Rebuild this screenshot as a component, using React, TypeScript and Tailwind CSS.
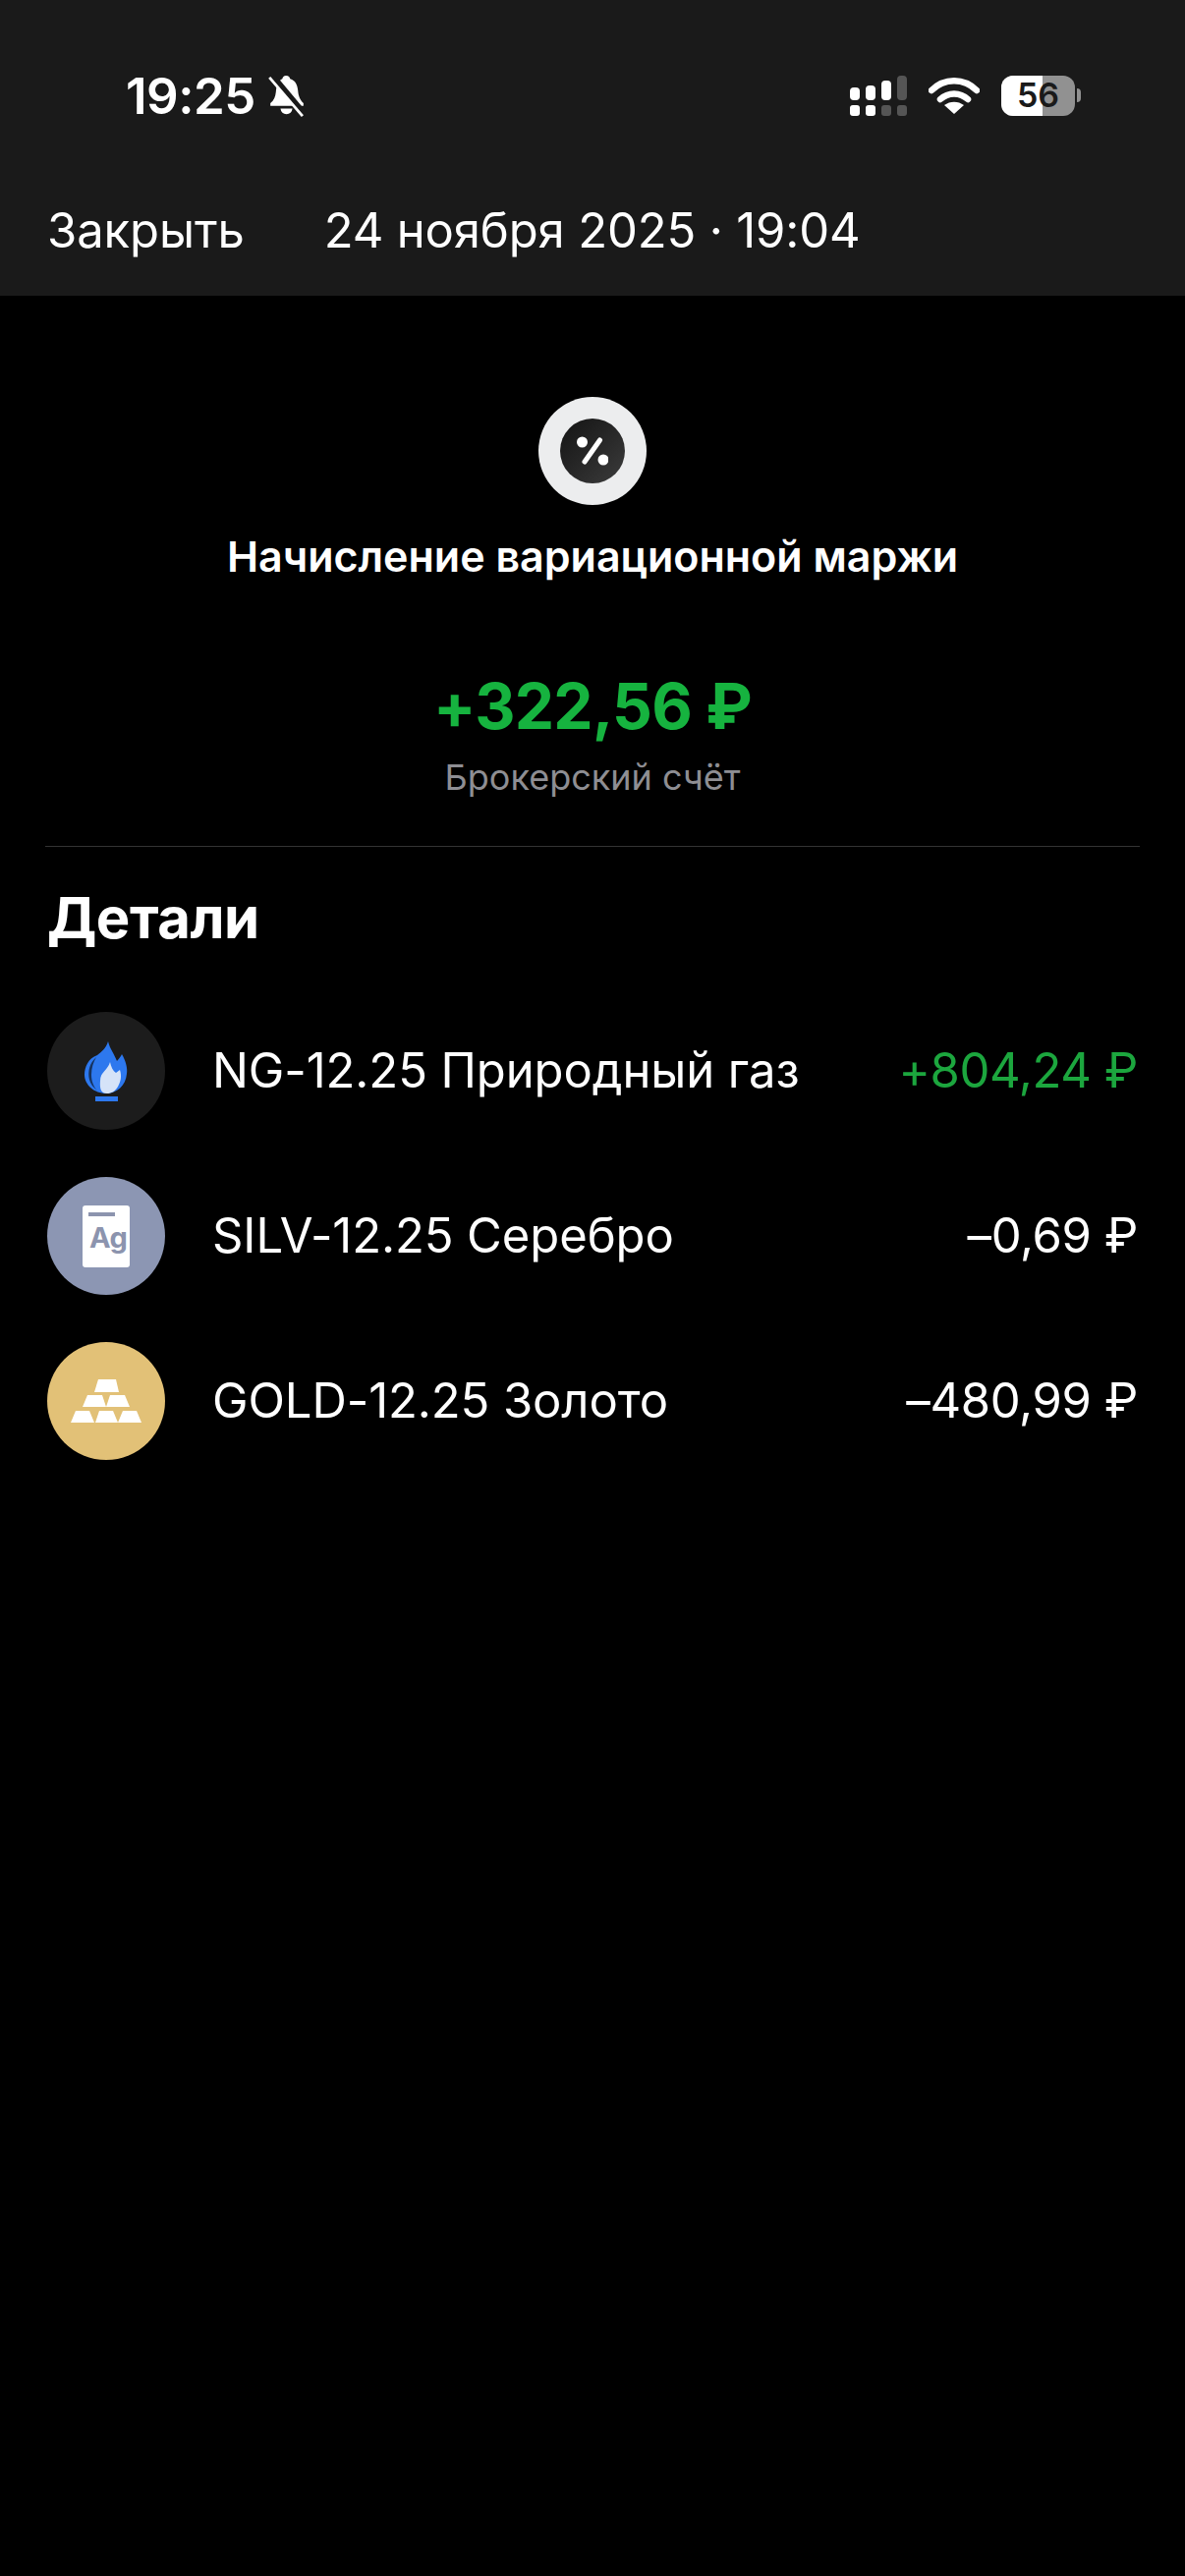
const font = "font-['Inter','Noto_Sans',sans-serif]";

function BellOff() {
  return (
    <svg width="40" height="43" viewBox="0 0 40 46">
      <path d="M19 1c3 0 4 1.500 4.500 3.500C29 6 31.500 11 32 17c.5 6 2 10 6 14v3H2v-3c4-3 5.500-7 6-12 .5-7 3-13 7-14.500C15.500 2.500 16.500 1 19 1z" fill="#fff" />
      <path d="M13 37h13c-.5 4-3 6-6.500 6S13.500 41 13 37z" fill="#fff" />
      <path d="M4 1l36 43" stroke="#1a1a1a" strokeWidth="6.500" />
      <path d="M1 3l36 42" stroke="#fff" strokeWidth="3" />
    </svg>
  );
}

function Cellular() {
  const top = [
    { h: 13, c: "#fff" },
    { h: 15, c: "#fff" },
    { h: 20, c: "#fff" },
    { h: 25, c: "#555" },
  ];
  const bottom = ["#fff", "#fff", "#555", "#555"];
  return (
    <div className="flex w-[58px] flex-col gap-[5px]">
      <div className="flex h-[25px] items-end justify-between">
        {top.map((b, i) => (
          <div key={i} className="w-[10px] rounded-[4px]" style={{ height: b.h, background: b.c }} />
        ))}
      </div>
      <div className="flex justify-between">
        {bottom.map((c, i) => (
          <div key={i} className="h-[11px] w-[10px] rounded-[3px]" style={{ background: c }} />
        ))}
      </div>
    </div>
  );
}

function Wifi() {
  return (
    <svg width="52" height="38" viewBox="0 0 52 38" fill="none">
      <path d="M3 14C16 1 36 1 49 14" stroke="#fff" strokeWidth="6.500" strokeLinecap="round" />
      <path d="M12 23c8-7.500 20-7.500 28 0" stroke="#fff" strokeWidth="6.500" strokeLinecap="round" />
      <path d="M16 29c6-4.500 14-4.500 20 0L26 38z" fill="#fff" />
    </svg>
  );
}

function Battery() {
  return (
    <div className="flex items-center gap-[2px]">
      <div className="relative h-[41px] w-[75px] overflow-hidden rounded-[12px] bg-[#919191]">
        <div className="h-full w-[42px] bg-white" />
        <span className="absolute inset-0 flex items-center justify-center text-[34px] leading-none font-semibold text-[#1a1a1a]">56</span>
      </div>
      <div className="h-[14px] w-[4px] rounded-r-full bg-[#919191]" />
    </div>
  );
}

function GasIcon() {
  return (
    <svg width="44" height="61" viewBox="0 0 44 61">
      <path d="M24 0c2 8 6 12 9 20 2-2 4-5 5-7 4 7 6 14 5 20-1 12-10 20-21 20C10 53 0 44 0 34 0 26 4 17 13 14c4-3 9-7 11-14z" fill="#2d78ee" />
      <path d="M12 16C5 22 3 31 5 39c1 4 4 8 8 11-4-4-6-10-6-16 0-7 2-13 5-18z" fill="#16335f" />
      <path d="M26 21c1 5 3 9 6 11l4-3c2 6 1 12-2 17-3 5-7 7-11 7-7 0-7.500-6-7-13 0-9 8-11 10-19z" fill="#d5e3f8" />
      <rect x="11" y="56" width="23" height="5" fill="#2d78ee" />
    </svg>
  );
}

function SilverIcon() {
  return (
    <div className="flex h-[63px] w-[48px] flex-col rounded-[3px] bg-white px-[6px] pt-[7px]">
      <div className="h-[4px] w-[27px] bg-[#8c94ae]" />
      <span className="mt-[7px] ml-[1px] text-[29px] leading-[30px] font-bold tracking-[-0.5px] text-[#8c94ae]">Ag</span>
    </div>
  );
}

function GoldIcon() {
  return (
    <svg width="72" height="44" viewBox="0 0 72 44" fill="#fff">
      <path d="M28 0h18l3 13H24z" />
      <path d="M17 16h15l4 12H12z" />
      <path d="M40 16h15l5 12H36z" />
      <path d="M5 32h14l5 12H0z" />
      <path d="M29 32h14l5 12H25z" />
      <path d="M53 32h14l5 12H48z" />
    </svg>
  );
}

const rows = [
  { name: "NG-12.25 Природный газ", value: "+804,24 ₽", green: true, bg: "bg-[#1c1c1c]", icon: <GasIcon /> },
  { name: "SILV-12.25 Серебро", value: "–0,69 ₽", green: false, bg: "bg-[#8c96b3]", icon: <SilverIcon /> },
  { name: "GOLD-12.25 Золото", value: "–480,99 ₽", green: false, bg: "bg-[#e2c177]", icon: <GoldIcon /> },
];

export default function App() {
  return (
    <div className={`${font} flex h-[2622px] w-[1206px] flex-col overflow-hidden bg-black text-white`}>
      {/* Header */}
      <header className="h-[301px] shrink-0 bg-[#1a1a1a]">
        <div className="flex items-center justify-between pt-[66px] pr-[106px] pl-[128px]">
          <div className="flex h-[62px] items-center gap-[12px]">
            <span className="text-[51px] leading-none font-semibold tracking-[-0.5px]">19:25</span>
            <BellOff />
          </div>
          <div className="flex items-center gap-[22px]">
            <Cellular />
            <Wifi />
            <Battery />
          </div>
        </div>
        <div className="mt-[77px] flex items-center text-[49px] leading-[60px]">
          <span className="ml-[48px] tracking-[-0.1px]">Закрыть</span>
          <span className="ml-[81px] tracking-[-0.15px]">24 ноября 2025 · 19:04</span>
        </div>
      </header>

      {/* Summary */}
      <section className="flex flex-col items-center pt-[103px]">
        <div className="flex h-[110px] w-[110px] items-center justify-center rounded-full bg-[#ecedee]">
          <div className="flex h-[66px] w-[66px] items-center justify-center rounded-full bg-gradient-to-br from-[#141414] to-[#3c3c3c]">
            <svg width="32" height="32" viewBox="0 0 32 32" fill="#fff">
              <circle cx="5.500" cy="7" r="5.500" />
              <circle cx="27" cy="25" r="5.500" />
              <path d="M23.500 5L8 27" stroke="#fff" strokeWidth="5" strokeLinecap="round" />
            </svg>
          </div>
        </div>
        <h1 className="mt-[26px] text-[43px] leading-[52px] font-semibold">Начисление вариационной маржи</h1>
        <div className="mt-[87px] text-[64px] leading-[80px] font-bold tracking-[-0.8px] text-[#16b33f]">+322,56 ₽</div>
        <div className="mt-[9px] text-[36px] leading-[46px] text-[#8e8e93]">Брокерский счёт</div>
      </section>

      <div className="mx-[46px] mt-[47px] h-[1px] bg-[#333333]" />

      {/* Details */}
      <section className="px-[48px] pt-[36px]">
        <h2 className="text-[58px] leading-[72px] font-bold tracking-[-0.5px]">Детали</h2>
        <div className="mt-[60px] flex flex-col gap-[48px]">
          {rows.map((r) => (
            <div key={r.name} className="flex h-[120px] items-center">
              <div className={`flex h-[120px] w-[120px] shrink-0 items-center justify-center rounded-full ${r.bg}`}>{r.icon}</div>
              <span className="ml-[48px] text-[49px] leading-[60px] tracking-[-0.1px]">{r.name}</span>
              <span className={`ml-auto text-[49px] leading-[60px] tracking-[-0.35px] ${r.green ? "text-[#1ca63e]" : "text-white"}`}>{r.value}</span>
            </div>
          ))}
        </div>
      </section>
    </div>
  );
}
